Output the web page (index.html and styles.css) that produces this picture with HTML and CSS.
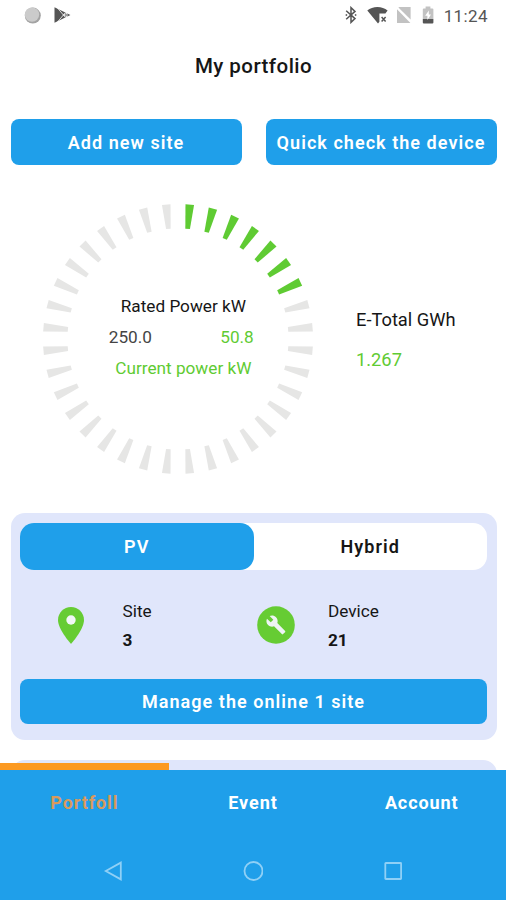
FILE: index.html
```html
<!DOCTYPE html>
<html lang="en">
<head>
    <meta charset="UTF-8">
    <meta name="viewport" content="width=device-width, initial-scale=1.0">
    <title>My portfolio</title>
    <link rel="stylesheet" href="styles.css">
</head>
<body>
    <div class="status-bar">
        <div class="status-left">
            <svg width="18" height="18" viewBox="0 0 18 18">
                <circle cx="9.8" cy="9.6" r="8" fill="#a3a3a3"/>
                <circle cx="9" cy="8.6" r="7.2" fill="#cbcbcb"/>
            </svg>
            <svg width="18" height="18" viewBox="0 0 18 18">
                <path d="M1.5 1.3L17.4 9 1.5 16.7z" fill="#555"/>
                <path d="M4.5 2L12.5 11.5M4.5 16L12.5 6.5M10.5 9L14 7.3V10.7z" fill="none" stroke="#fff" stroke-width="0.8"/>
            </svg>
        </div>
        <div class="status-right">
            <svg class="bluetooth" width="12" height="18" viewBox="0 0 12 18">
                <path d="M1.2 4.8L10 12.6 6 16.4V1.6L10 5.4 1.2 13.2" fill="none" stroke="#555" stroke-width="1.5"/>
                <circle cx="1.4" cy="9" r="0.9" fill="#666"/>
                <circle cx="10.6" cy="9" r="0.9" fill="#666"/>
            </svg>
            <svg class="wifi" width="21" height="18" viewBox="0 0 21 18">
                <path d="M0.3 4.5C5.5 -0.2 15.3 -0.2 20.6 4.5L18.4 7.4H12.4V15.8L11 17.4z" fill="#555"/>
                <path d="M14.6 11l4 4.4M18.6 11l-4 4.4" stroke="#555" stroke-width="1.5"/>
            </svg>
            <svg class="sim" width="16" height="18" viewBox="0 0 16 18">
                <path d="M3.2 1H14.6V13.6L2.4 1.6z" fill="#c2c2c2"/>
                <path d="M1 3.2V17H14.4z" fill="#c2c2c2"/>
            </svg>
            <svg class="battery" width="12" height="18" viewBox="0 0 12 18">
                <path d="M3.6 0.4h4.8v2h2q1 0 1 1V13H0.8V3.4q0-1 1-1h1.8z" fill="#c2c2c2"/>
                <path d="M0.8 13h10.6v3.4q0 1-1 1H1.8q-1 0-1-1z" fill="#555"/>
                <path d="M6.8 4.4L3.2 9.8h2.2v4.2L9 8.6H6.8z" fill="#fff"/>
            </svg>
            <span>11:24</span>
        </div>
    </div>

    <main>
        <h1>My portfolio</h1>

        <div class="actions">
            <button class="btn">Add new site</button>
            <button class="btn">Quick check the device</button>
        </div>

        <section class="summary">
            <div class="gauge">
                <svg width="272" height="272" viewBox="-136 -136 272 272">
                    <g id="ticks"></g>
                </svg>
                <div class="gauge-text">
                    <p class="rated">Rated Power kW</p>
                    <p class="values"><span>250.0</span><span class="green">50.8</span></p>
                    <p class="current green">Current power kW</p>
                </div>
            </div>
            <div class="total">
                <p>E-Total GWh</p>
                <p class="green">1.267</p>
            </div>
        </section>

        <section class="card">
            <div class="switch">
                <button class="active">PV</button>
                <button>Hybrid</button>
            </div>
            <div class="stats">
                <div class="stat">
                    <svg class="pin" width="26" height="37" viewBox="0 0 26 37">
                        <path d="M13 0C5.8 0 0 5.8 0 13c0 9.6 13 24 13 24s13-14.4 13-24C26 5.8 20.2 0 13 0z" fill="#66cc33"/>
                        <circle cx="13" cy="13" r="4.7" fill="#f1f7f6"/>
                    </svg>
                    <div>
                        <p>Site</p>
                        <p class="count">3</p>
                    </div>
                </div>
                <div class="stat">
                    <svg class="tool" width="38" height="38" viewBox="0 0 38 38">
                        <circle cx="19" cy="19" r="18.8" fill="#66cc33"/>
                        <path transform="translate(8.6 8.6) scale(.86)" d="M22.7 19l-9.1-9.1c.9-2.3.4-5-1.5-6.9-2-2-5-2.4-7.4-1.3L9 6 6 9 1.6 4.7C.4 7.1.9 10.1 2.9 12.1c1.9 1.9 4.6 2.4 6.9 1.5l9.1 9.1c.4.4 1 .4 1.4 0l2.3-2.3c.5-.4.5-1.1.1-1.4z" fill="#eef4f4"/>
                    </svg>
                    <div>
                        <p>Device</p>
                        <p class="count">21</p>
                    </div>
                </div>
            </div>
            <button class="btn manage">Manage the online 1 site</button>
        </section>

        <section class="card next"></section>
    </main>

    <footer>
        <div class="indicator"></div>
        <nav>
            <a class="current-tab">Portfoll</a>
            <a>Event</a>
            <a>Account</a>
        </nav>
        <div class="system-nav">
            <svg width="20" height="20" viewBox="0 0 20 20"><path d="M2.8 10L17.8 1.6v16.8z"/></svg>
            <svg width="20" height="20" viewBox="0 0 20 20"><circle cx="10.5" cy="10" r="9"/></svg>
            <svg width="20" height="20" viewBox="0 0 20 20"><rect x="2.3" y="2" width="15.8" height="16" rx="0.5"/></svg>
        </div>
    </footer>

    <script>
        const total = 36;
        const filled = 7;
        let ticks = '';

        // One tick every 10 degrees, starting at 5
        for (let i = 0; i < total; i++) {
            const color = i < filled ? '#5fcb33' : '#e6e6e5';
            ticks += `<path d="M-4.3 -135L4.3 -135L2.3 -110.5L-2.3 -110.5z" fill="${color}" transform="rotate(${i * 10 + 5})"/>`;
        }
        document.getElementById('ticks').innerHTML = ticks;
    </script>
</body>
</html>
```
FILE: styles.css
```css
* {
    box-sizing: border-box;
}
body {
    font-family: Roboto, sans-serif;
    margin: 0;
    width: 506px;
    height: 900px;
    display: flex;
    flex-direction: column;
    overflow: hidden;
    background-color: #fff;
    color: #161616;
    font-size: 17.2px;
}
p, h1 {
    margin: 0;
}
svg {
    display: block;
    flex: none;
}
button {
    font-family: inherit;
    font-weight: 600;
    font-size: 18px;
    letter-spacing: 1.05px;
    border: none;
    padding: 0;
    white-space: nowrap;
}
.status-bar {
    height: 32px;
    flex: none;
    display: flex;
    justify-content: space-between;
    padding: 6px 18px 0 23px;
}
.status-left {
    display: flex;
    gap: 12px;
}
.status-right {
    display: flex;
    color: #555;
    font-size: 17px;
    line-height: 20px;
    letter-spacing: 0.4px;
}
.wifi {
    margin-left: 10px;
}
.sim {
    margin-left: 8px;
}
.battery {
    margin-left: 10px;
}
.status-right span {
    margin-left: 10px;
}
main {
    height: 738px;
    flex: none;
    overflow: hidden;
    padding: 0 9.5px 0 10.5px;
}
h1 {
    font-size: 20.5px;
    font-weight: 500;
    line-height: 24px;
    letter-spacing: 0.45px;
    text-align: center;
    padding-top: 22px;
}
.actions {
    display: grid;
    grid-template-columns: 1fr 1fr;
    gap: 24px;
    margin-top: 41px;
}
.btn {
    height: 46px;
    border-radius: 8px;
    background-color: #1f9fea;
    color: #fff;
}
.summary {
    display: flex;
    align-items: center;
    margin-top: 38px;
}
.gauge {
    display: grid;
    place-items: center;
    margin-left: 31.5px;
}
.gauge > * {
    grid-area: 1 / 1;
}
.gauge-text {
    width: 145px;
    line-height: 31px;
    margin-left: 6.5px;
    padding-bottom: 4px;
}
.rated {
    margin-left: 12px;
    white-space: nowrap;
}
.current {
    margin-left: 6.5px;
    white-space: nowrap;
}
.values {
    display: flex;
    justify-content: space-between;
    color: #444;
}
.green {
    color: #5fcb33;
}
.total {
    margin-left: 42px;
    font-size: 18.3px;
    line-height: 40px;
    padding-top: 1px;
}
.card {
    height: 227px;
    margin-top: 38px;
    padding: 9.5px;
    border-radius: 14px;
    background-color: #e0e6fb;
}
.switch {
    display: grid;
    grid-template-columns: 1fr 1fr;
    height: 47px;
    border-radius: 14px;
    background-color: #fff;
}
.switch button {
    border-radius: 14px;
    background: none;
    color: #161616;
}
.switch .active {
    background-color: #1f9fea;
    color: #fff;
}
.stats {
    display: grid;
    grid-template-columns: 199px 1fr;
    height: 109px;
    padding: 27px 0 0 38px;
    line-height: 29px;
}
.stat {
    display: flex;
}
.pin {
    margin: 10px 38.5px 0 0;
}
.tool {
    margin: 9px 33px 0 0;
}
.count {
    font-weight: 700;
}
.manage {
    display: block;
    width: 100%;
    height: 45px;
}
.next {
    margin-top: 20px;
}
footer {
    position: relative;
    height: 130px;
    background-color: #1f9fea;
}
.indicator {
    position: absolute;
    top: -7px;
    left: 0;
    width: 169px;
    height: 7px;
    background-color: #fc9a22;
}
nav {
    display: grid;
    grid-template-columns: repeat(3, 1fr);
    height: 66px;
    line-height: 65px;
    text-align: center;
    font-size: 18px;
    font-weight: 700;
    letter-spacing: 0.9px;
    color: #fff;
}
.current-tab {
    color: #d99a5c;
}
.system-nav {
    display: flex;
    justify-content: center;
    gap: 120px;
    padding-top: 25px;
}
.system-nav svg {
    fill: none;
    stroke: #8fd0f6;
    stroke-width: 1.8;
}
```
